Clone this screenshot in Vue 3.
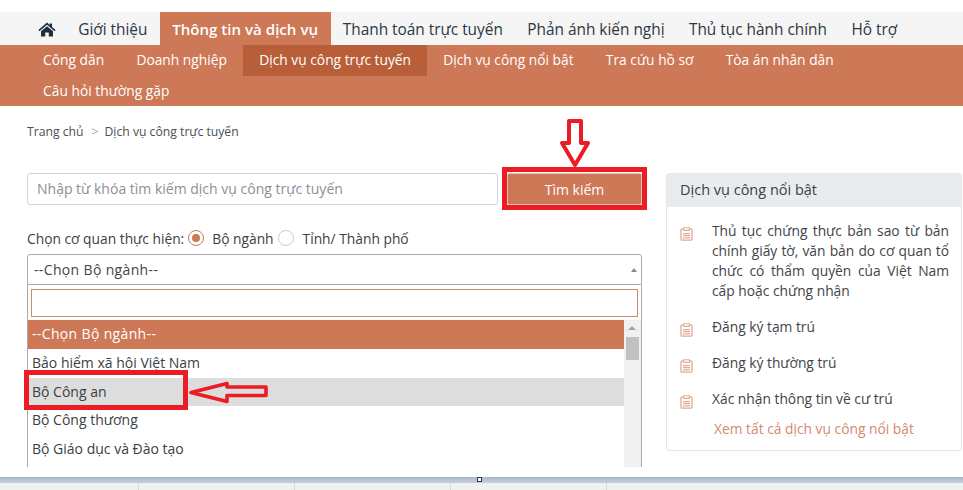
<template>
  <div class="page">
    <nav class="main-nav">
      <a class="home" href="#" aria-label="Trang chủ">
        <svg width="18" height="15" viewBox="0 0 18 15"><path d="M9 0.6 L11.6 2.9 V1.4 H14 V5 L17.6 8.1 L16.6 9.2 L9 2.8 L1.4 9.2 L0.4 8.1 Z" fill="#1f2d3d"/><path d="M9 4.3 L15 9.3 V14.6 H10.8 V10.4 H7.2 V14.6 H3 V9.3 Z" fill="#1f2d3d"/></svg>
      </a>
      <a v-for="item in mainMenu" :key="item" href="#" class="main-link" :class="{ active: item === 'Thông tin và dịch vụ' }">{{ item }}</a>
    </nav>
    <nav class="sub-nav">
      <a v-for="item in subMenu" :key="item" href="#" class="sub-link" :class="{ active: item === 'Dịch vụ công trực tuyến' }">{{ item }}</a>
    </nav>

    <div class="crumbs">
      <span>Trang chủ</span><span class="crumb-sep">&gt;</span><span>Dịch vụ công trực tuyến</span>
    </div>

    <div class="content">
      <main class="left">
        <div class="search-row">
          <input class="search-input" placeholder="Nhập từ khóa tìm kiếm dịch vụ công trực tuyến" />
          <button class="search-btn">Tìm kiếm</button>
        </div>

        <div class="agency-row">
          <span>Chọn cơ quan thực hiện:</span>
          <span class="radio checked"></span>
          <span class="radio-label">Bộ ngành</span>
          <span class="radio"></span>
          <span class="radio-label">Tỉnh/ Thành phố</span>
        </div>

        <div class="select">
          <div class="select-head">
            <span class="dashed">--Chọn Bộ ngành--</span>
            <span class="caret"></span>
          </div>
          <div class="dropdown">
            <div class="filter-wrap"><div class="filter"></div></div>
            <div class="list">
              <div class="options">
                <div v-for="o in options" :key="o" class="option" :class="{ selected: o === '--Chọn Bộ ngành--', hover: o === 'Bộ Công an' }">{{ o }}</div>
              </div>
              <div class="scrollbar">
                <span class="caret small"></span>
                <div class="thumb"></div>
              </div>
            </div>
          </div>
        </div>
      </main>

      <aside class="panel">
        <h3 class="panel-title">Dịch vụ công nổi bật</h3>
        <ul class="panel-list">
          <li v-for="s in services" :key="s">
            <svg class="doc" width="13" height="14" viewBox="0 0 13 15" preserveAspectRatio="none" fill="none" stroke="#e3ab93" stroke-width="1.3"><path d="M3.5 2 H2 Q1 2 1 3 V13 Q1 14 2 14 H11 Q12 14 12 13 V3 Q12 2 11 2 H9.5"/><rect x="3.5" y="0.8" width="6" height="2.8" rx="0.5"/><path d="M3 7 H10 M3 9.3 H10 M3 11.6 H10"/></svg>
            <span>{{ s }}</span>
          </li>
        </ul>
        <a href="#" class="see-all">Xem tất cả dịch vụ công nổi bật</a>
      </aside>
    </div>

    <div class="taskbar">
      <div class="task-band"><span class="handle"></span></div>
      <div class="task-cells">
        <span v-for="(w, i) in taskCells" :key="i" class="cell" :style="{ width: w + 'px' }"></span>
      </div>
    </div>

    <!-- red annotations drawn over the screenshot -->
    <div class="mark mark-btn"></div>
    <div class="mark mark-opt"></div>
    <svg class="arrow arrow-down" width="34" height="52" viewBox="0 0 34 52" fill="none" stroke="#ed1c24" stroke-width="4"><path d="M10 3 H22 V25 H29 L16 47 L3 25 H10 Z" stroke-linejoin="round"/></svg>
    <svg class="arrow arrow-left" width="82" height="26" viewBox="0 0 82 26" fill="none" stroke="#ed1c24" stroke-width="3.6"><path d="M4 13.5 L40 4.5 V8 H79 V16.5 H40 V22.5 Z" stroke-linejoin="round"/></svg>
  </div>
</template>

<script setup>
const mainMenu = ['Giới thiệu', 'Thông tin và dịch vụ', 'Thanh toán trực tuyến', 'Phản ánh kiến nghị', 'Thủ tục hành chính', 'Hỗ trợ']
const subMenu = ['Công dân', 'Doanh nghiệp', 'Dịch vụ công trực tuyến', 'Dịch vụ công nổi bật', 'Tra cứu hồ sơ', 'Tòa án nhân dân', 'Câu hỏi thường gặp']
const options = ['--Chọn Bộ ngành--', 'Bảo hiểm xã hội Việt Nam', 'Bộ Công an', 'Bộ Công thương', 'Bộ Giáo dục và Đào tạo']
const services = [
  'Thủ tục chứng thực bản sao từ bản chính giấy tờ, văn bản do cơ quan tổ chức có thẩm quyền của Việt Nam cấp hoặc chứng nhận',
  'Đăng ký tạm trú',
  'Đăng ký thường trú',
  'Xác nhận thông tin về cư trú'
]
const taskCells = [139, 156, 156, 156]
</script>

<style>
html, body { margin: 0; background: #fff; }
</style>

<style scoped>
.page {
  position: relative;
  width: 963px;
  height: 490px;
  box-sizing: border-box;
  padding-top: 12px;
  overflow: hidden;
  display: flex;
  flex-direction: column;
  font-family: "Open Sans", "Noto Sans", sans-serif;
  color: #3a3f44;
  background: #fff;
}
a { text-decoration: none; color: inherit; }

.main-nav {
  display: flex;
  align-items: stretch;
  flex-shrink: 0;
  height: 33px;
  padding-left: 30px;
  background: #f5f5f5;
}
.home { display: flex; align-items: center; padding: 2px 10px 0 8px; }
.main-link {
  display: flex;
  align-items: center;
  padding: 1px 12.2px 0;
  font-size: 15.4px;
  color: #2d3741;
  white-space: nowrap;
}
.main-link.active { background: #cd7856; color: #fff; font-weight: 600; font-size: 15.1px; padding: 1px 12.5px 0; }

.sub-nav {
  flex-shrink: 0;
  height: 61px;
  padding-left: 27px;
  padding-right: 100px;
  background: #cd7856;
  display: flex;
  flex-wrap: wrap;
  align-content: flex-start;
  box-sizing: border-box;
}
.sub-link {
  height: 31px;
  line-height: 30px;
  padding: 0 16.1px;
  font-size: 13.8px;
  color: #fff;
  white-space: nowrap;
}
.sub-link.active { background: #b85e38; }

.crumbs {
  flex-shrink: 0;
  padding: 17px 0 33px 27px;
  font-size: 12.2px;
  line-height: 17px;
  color: #4a4f55;
}
.crumb-sep { margin: 0 6px 0 8px; color: #aaa; }

.content {
  flex: 1;
  min-height: 0;
  padding-left: 27px;
  display: flex;
  gap: 24px;
}
.left { width: 615px; flex-shrink: 0; }

.search-row { display: flex; gap: 9px; }
.search-input {
  width: 471px;
  height: 32px;
  box-sizing: border-box;
  border: 1px solid #ced4da;
  border-radius: 3px;
  padding: 0 9px 2px;
  font: inherit;
  font-size: 14px;
  outline: none;
}
.search-input::placeholder { color: #8a9097; }
.search-btn {
  width: 135px;
  height: 32px;
  border: 1px solid #e8c4b4;
  background: #cd7856;
  color: #fff;
  font: inherit;
  font-size: 14px;
  border-radius: 2px;
}

.agency-row {
  display: flex;
  align-items: center;
  margin-top: 23px;
  height: 20px;
  font-size: 13.8px;
  color: #3a3f44;
  white-space: nowrap;
}
.radio {
  width: 14px;
  height: 14px;
  border: 1px solid #ccc;
  border-radius: 50%;
  margin-left: 4px;
  margin-right: 8px;
  position: relative;
  box-sizing: content-box;
}
.radio.checked { border-color: #cd7856; }
.radio.checked::after {
  content: "";
  position: absolute;
  inset: 3px;
  border-radius: 50%;
  background: #cd7856;
}
.radio-label + .radio { margin-left: 4px; margin-right: 9px; }

.select { margin-top: 6px; width: 615px; }
.select-head {
  height: 31px;
  box-sizing: border-box;
  border: 1px solid #aaa;
  border-radius: 3px 3px 0 0;
  padding: 0 4px 0 6px;
  display: flex;
  align-items: center;
  justify-content: space-between;
  font-size: 14px;
  color: #444;
}
.dashed { letter-spacing: 0.35px; }
.caret {
  width: 0;
  height: 0;
  border-left: 3px solid transparent;
  border-right: 3px solid transparent;
  border-bottom: 4px solid #888;
}
.dropdown {
  height: 182px;
  overflow: hidden;
  border-left: 1px solid #aaa;
  border-right: 1px solid #aaa;
  box-sizing: border-box;
}
.filter-wrap { padding: 4px 3px 3px; }
.filter { height: 28px; border: 1px solid #c98a6e; box-sizing: border-box; }
.list { display: flex; height: 147px; }
.options { flex: 1; }
.option {
  height: 28.8px;
  line-height: 28px;
  padding: 0 4px;
  font-size: 14px;
  color: #3a3f44;
  white-space: nowrap;
}
.option.selected { background: #cd7856; color: #fff; letter-spacing: 0.35px; }
.option.hover { background: #ddd; }
.scrollbar {
  width: 17px;
  background: #f1f1f1;
  flex-shrink: 0;
  position: relative;
}
.caret.small { position: absolute; top: 6px; left: 4px; border-left-width: 4px; border-right-width: 4px; border-bottom-color: #a3a3a3; }
.thumb { position: absolute; top: 17px; left: 2px; width: 13px; height: 23px; background: #c1c1c1; }

.panel {
  width: 296px;
  height: 278px;
  flex-shrink: 0;
  box-sizing: border-box;
  border: 1px solid #e4e6e8;
  border-radius: 3px;
  background: #fff;
}
.panel-title {
  margin: 0;
  height: 33px;
  line-height: 31px;
  padding: 0 13px;
  font-size: 14.5px;
  font-weight: 400;
  background: #e9ecef;
  color: #3a3f44;
}
.panel-list { list-style: none; margin: 0; padding: 14px 12px 0 13px; }
.panel-list li {
  display: flex;
  gap: 19px;
  font-size: 13.8px;
  line-height: 20px;
  margin-bottom: 16px;
  text-align: justify;
  color: #3f4449;
}
.doc { flex-shrink: 0; margin-top: 6px; }
.see-all {
  display: block;
  margin-top: -6px;
  padding-left: 47px;
  font-size: 13.8px;
  line-height: 20px;
  color: #d28a70;
}

.taskbar { flex-shrink: 0; height: 13px; }
.task-band {
  position: relative;
  height: 6px;
  background: linear-gradient(#a9b5c7, #c7d0de);
}
.handle { position: absolute; left: 477px; top: 0; width: 5px; height: 5px; border: 1px solid #333; background: #fff; box-sizing: border-box; }
.task-cells { display: flex; height: 7px; background: #f0f0f0; }
.cell { border-right: 1px solid #d8d8d8; box-sizing: border-box; }

.mark { position: absolute; border: 5px solid #ed1c24; box-sizing: border-box; }
.mark-btn { left: 502px; top: 167px; width: 145px; height: 43px; }
.mark-opt { left: 24px; top: 370px; width: 164px; height: 40px; }
.arrow { position: absolute; }
.arrow-down { left: 559px; top: 118px; }
.arrow-left { left: 187px; top: 379px; }
</style>
